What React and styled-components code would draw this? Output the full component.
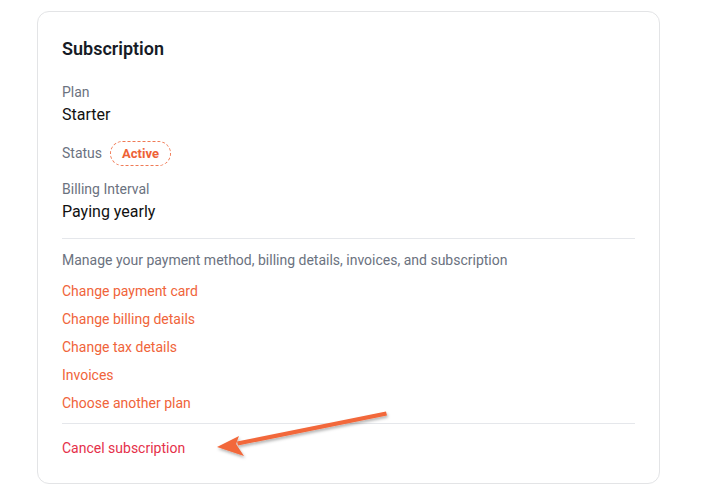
import styled, { createGlobalStyle } from "styled-components";

const GlobalStyle = createGlobalStyle`
  html, body {
    margin: 0;
    padding: 0;
    background: #ffffff;
    font-family: Roboto, "Liberation Sans", Arial, sans-serif;
  }
`;

const Page = styled.div`
  position: relative;
  width: 703px;
  height: 500px;
  padding: 11px 0 0 37px;
  box-sizing: border-box;
`;

const Card = styled.section`
  width: 623px;
  box-sizing: border-box;
  border: 1px solid #e3e4e6;
  border-radius: 12px;
  padding: 23px 24px 25px 24px;
  background: #fff;
`;

const Title = styled.h2`
  margin: 0 0 19px 0;
  font-size: 18px;
  line-height: 28px;
  font-weight: 600;
  color: #161b26;
`;

const Fields = styled.div`
  display: flex;
  flex-direction: column;
  gap: 13px;
`;

const Field = styled.div`
  display: flex;
  flex-direction: column;
`;

const InlineField = styled.div`
  display: flex;
  align-items: center;
  gap: 8px;
  height: 26px;
`;

const Label = styled.span`
  font-size: 14px;
  line-height: 21px;
  color: #6b7280;
`;

const Value = styled.span`
  font-size: 16px;
  line-height: 24px;
  color: #111111;
`;

const Badge = styled.span`
  display: inline-flex;
  align-items: center;
  height: 25px;
  box-sizing: border-box;
  padding: 0 11px;
  border: 1px dashed #f07a55;
  border-radius: 13px;
  font-size: 13px;
  font-weight: 700;
  color: #ee6236;
`;

const Divider = styled.hr`
  border: none;
  border-top: 1px solid #e5e7eb;
  margin: ${(p) => p.$margin};
`;

const Hint = styled.p`
  margin: 0 0 11px 0;
  font-size: 14px;
  line-height: 20px;
  color: #6b7280;
`;

const Links = styled.div`
  display: flex;
  flex-direction: column;
  gap: 8px;
`;

const Link = styled.a`
  font-size: 14px;
  line-height: 20px;
  color: ${(p) => (p.$danger ? "#e5304a" : "#f0643a")};
  text-decoration: none;
  cursor: pointer;
`;

const Overlay = styled.svg`
  position: absolute;
  left: 0;
  top: 0;
  pointer-events: none;
`;

const Arrow = () => (
  <Overlay width="703" height="500" viewBox="0 0 703 500">
    <defs>
      <filter id="sh" x="-20%" y="-50%" width="140%" height="200%">
        <feDropShadow dx="1" dy="2" stdDeviation="1.5" floodColor="#000" floodOpacity="0.3" />
      </filter>
    </defs>
    <g filter="url(#sh)" fill="#f2673a" stroke="none">
      <path d="M386 411.5 L387 415.5 L238 445.5 L237 441.5 Z" />
      <path d="M217 447 L239 436 L236 444 L244 456 Z" />
    </g>
  </Overlay>
);

const links = [
  "Change payment card",
  "Change billing details",
  "Change tax details",
  "Invoices",
  "Choose another plan",
];

export default function App() {
  return (
    <Page>
      <GlobalStyle />
      <Card>
        <Title>Subscription</Title>
        <Fields>
          <Field>
            <Label>Plan</Label>
            <Value>Starter</Value>
          </Field>
          <InlineField>
            <Label>Status</Label>
            <Badge>Active</Badge>
          </InlineField>
          <Field>
            <Label>Billing Interval</Label>
            <Value>Paying yearly</Value>
          </Field>
        </Fields>
        <Divider $margin="14px 0 11px 0" />
        <Hint>Manage your payment method, billing details, invoices, and subscription</Hint>
        <Links>
          {links.map((l) => (
            <Link key={l}>{l}</Link>
          ))}
        </Links>
        <Divider $margin="10px 0 14px 0" />
        <Link $danger>Cancel subscription</Link>
      </Card>
      <Arrow />
    </Page>
  );
}
